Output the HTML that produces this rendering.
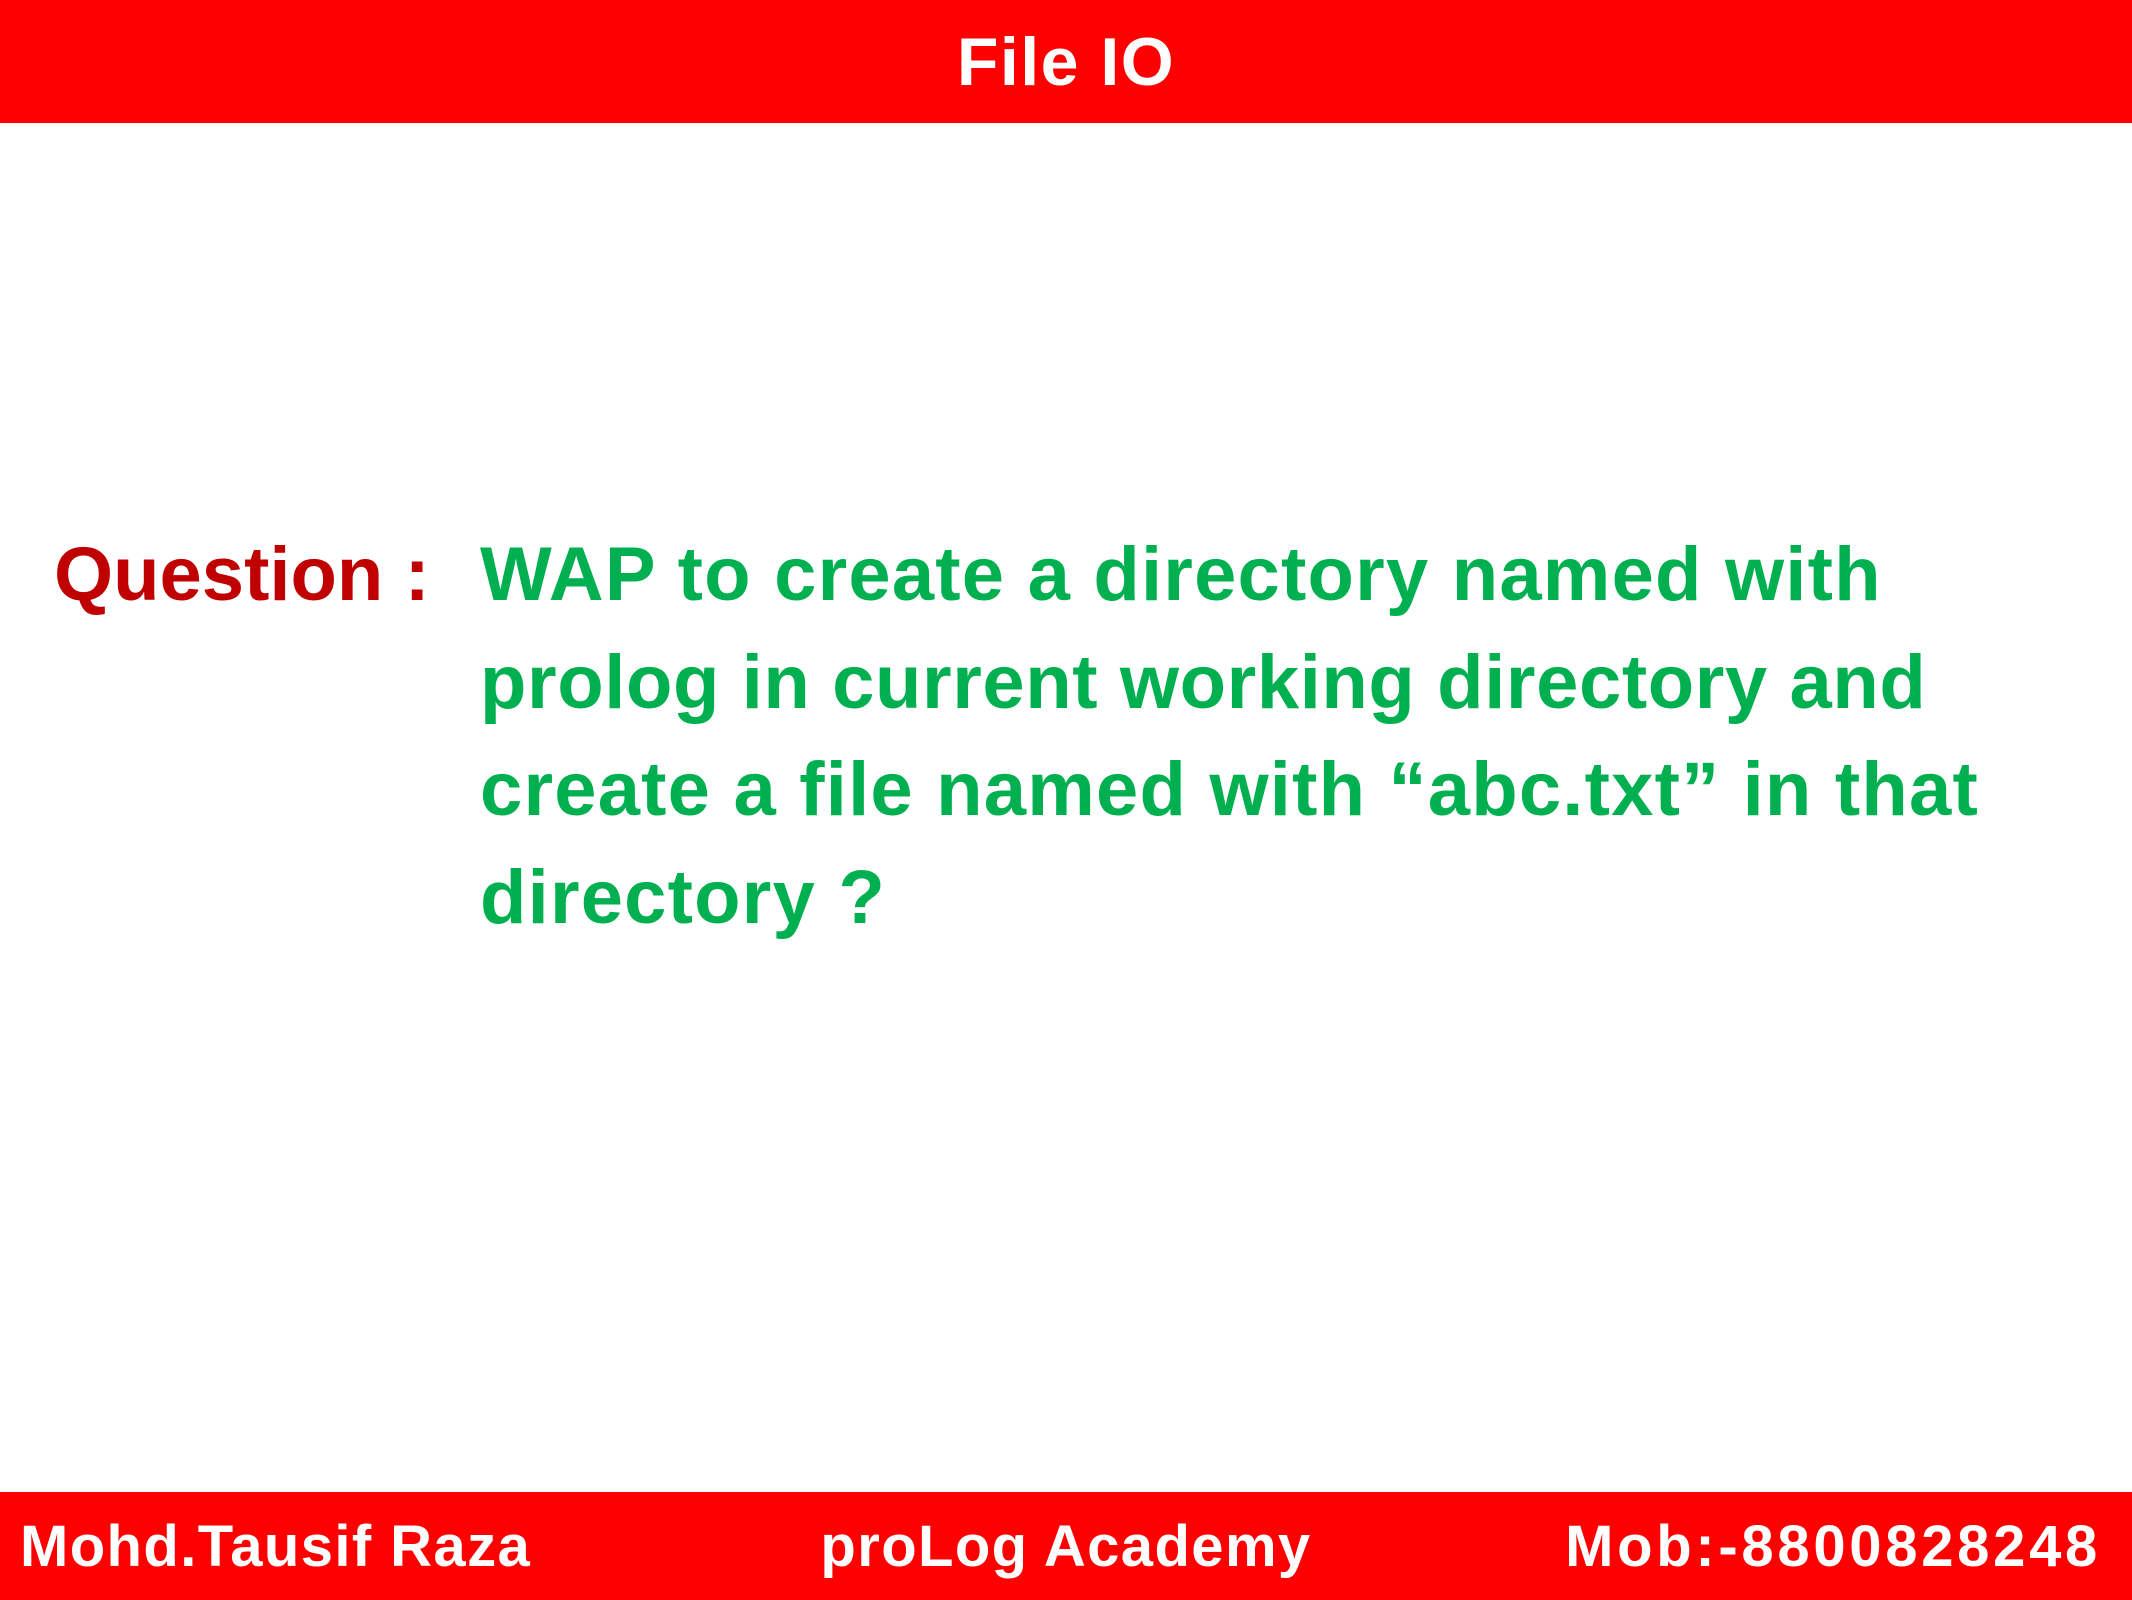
<!DOCTYPE html>
<html><head><meta charset="utf-8"><style>
html,body{margin:0;padding:0;width:2132px;height:1600px;background:#fff;overflow:hidden;position:relative;font-family:"Liberation Sans",sans-serif;font-weight:bold}
.top{position:absolute;left:0;top:0;width:2132px;height:123px;background:#ff0000}
.title{position:absolute;left:0;width:2132px;top:22px;text-align:center;color:#fff;font-size:68px;line-height:80px;letter-spacing:1.5px}
.bot{position:absolute;left:0;top:1492px;width:2132px;height:108px;background:#ff0000}
.ft{position:absolute;top:1512px;color:#fff;font-size:58px;line-height:70px;letter-spacing:1.4px;white-space:nowrap}
.q{position:absolute;left:54px;top:530px;color:#c00000;font-size:76px;line-height:90px;letter-spacing:0px}
.l{position:absolute;left:480px;color:#00b050;font-size:76px;line-height:90px;letter-spacing:1.2px;white-space:nowrap}
</style></head><body>
<div class="top"></div><div class="title">File IO</div>
<div class="q">Question :</div>
<div class="l" style="top:530px">WAP to create a directory named with</div>
<div class="l" style="top:638px;letter-spacing:0.6px">prolog in current working directory and</div>
<div class="l" style="top:745px">create a file named with “abc.txt” in that</div>
<div class="l" style="top:853px">directory ?</div>
<div class="bot"></div>
<div class="ft" style="left:20px">Mohd.Tausif Raza</div>
<div class="ft" style="left:0;width:2132px;text-align:center">proLog Academy</div>
<div class="ft" style="right:31px;letter-spacing:3.7px">Mob:-8800828248</div>
</body></html>
